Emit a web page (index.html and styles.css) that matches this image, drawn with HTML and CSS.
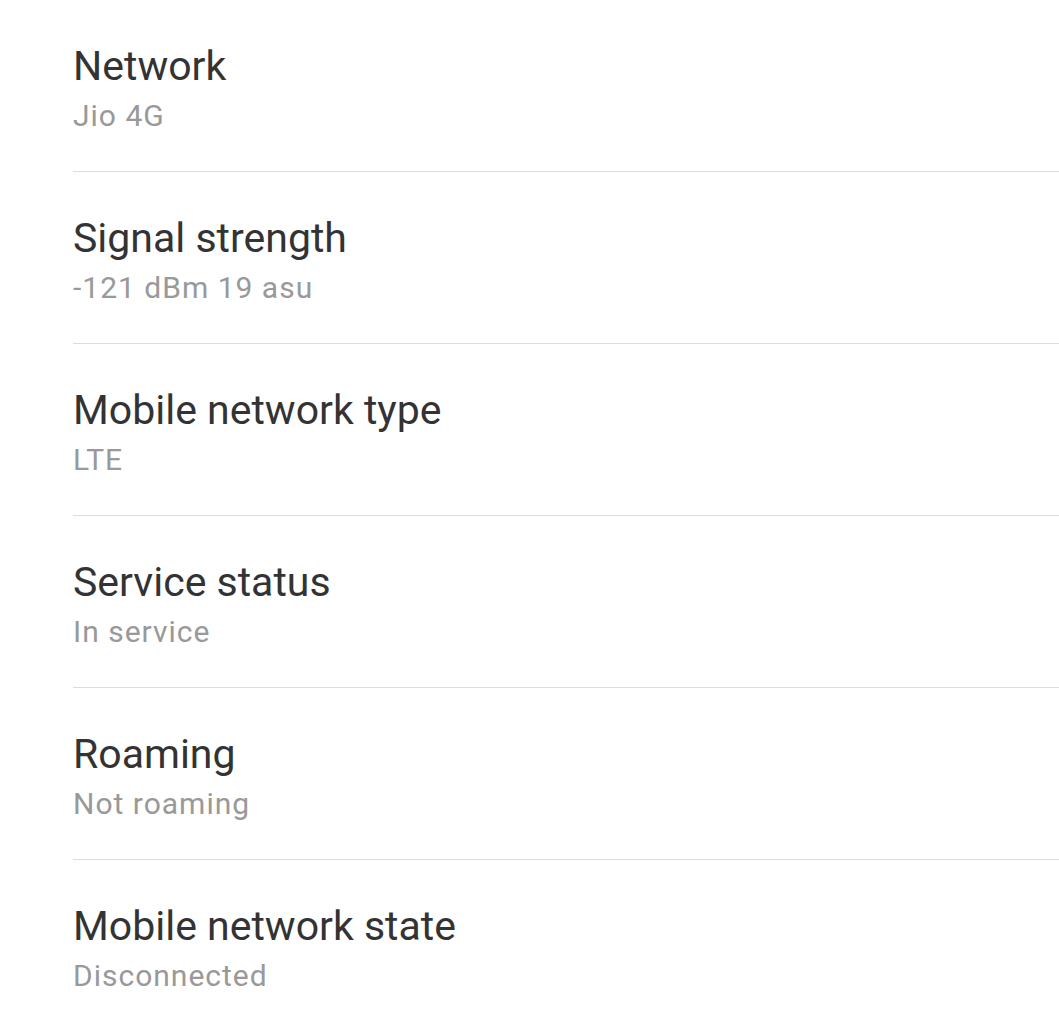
FILE: index.html
```html
<!DOCTYPE html>
<html lang="en">
<head>
  <meta charset="UTF-8">
  <meta name="viewport" content="width=device-width, initial-scale=1.0">
  <title>SIM status</title>
  <link rel="stylesheet" href="styles.css">
</head>
<body>

  <!-- Status list -->
  <ul class="status-list">
    <li class="status-item">
      <div class="status-title">Network</div>
      <div class="status-value">Jio 4G</div>
    </li>
    <li class="status-item">
      <div class="status-title">Signal strength</div>
      <div class="status-value">-121 dBm 19 asu</div>
    </li>
    <li class="status-item">
      <div class="status-title">Mobile network type</div>
      <div class="status-value">LTE</div>
    </li>
    <li class="status-item">
      <div class="status-title">Service status</div>
      <div class="status-value">In service</div>
    </li>
    <li class="status-item">
      <div class="status-title">Roaming</div>
      <div class="status-value">Not roaming</div>
    </li>
    <li class="status-item">
      <div class="status-title">Mobile network state</div>
      <div class="status-value">Disconnected</div>
    </li>
  </ul>

</body>
</html>
```

FILE: styles.css
```css
body {
  margin: 0;
  background-color: #fff;
  font-family: Roboto, "Noto Sans", sans-serif;
  overflow: hidden;
}

.status-list {
  list-style: none;
  margin: 0;
  padding: 0 0 0 73px;
}

.status-item {
  display: flex;
  flex-direction: column;
  box-sizing: border-box;
  height: 172px;
  padding-top: 42px;
  border-bottom: 1px solid #dcdcdc; /* Thin divider */
}

.status-title {
  font-size: 41px;
  line-height: 48px;
  color: #333;
}

.status-value {
  margin-top: 8px;
  font-size: 30px;
  line-height: 36px;
  letter-spacing: 1px;
  color: #999;
}
```
